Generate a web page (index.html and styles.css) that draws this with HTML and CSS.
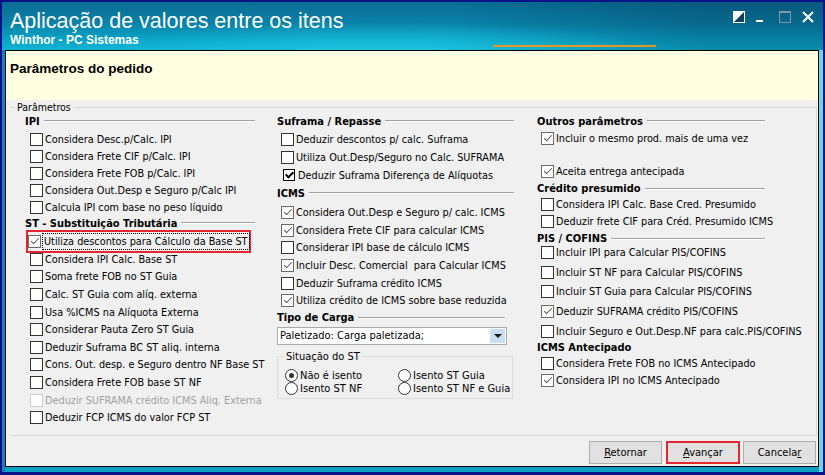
FILE: index.html
```html
<!DOCTYPE html>
<html lang="pt-BR">
<head>
  <meta charset="UTF-8">
  <meta name="viewport" content="width=device-width, initial-scale=1.0">
  <title>Aplicação de valores entre os itens</title>
  <link rel="stylesheet" href="styles.css">
</head>
<body>
  <div class="window">
    <div class="titlebar">
      <div class="titles">
        <div class="title">Aplicação de valores entre os itens</div>
        <div class="subtitle">Winthor - PC Sistemas</div>
      </div>
      <div class="controls">
        <svg width="12" height="12" viewBox="0 0 12 12"><rect x="0.5" y="0.5" width="11" height="11" fill="#fff"/><path d="M11.5 0.5 L11.5 11.5 L0.5 11.5 Z" fill="#0b3f66"/><rect x="0.5" y="0.5" width="11" height="11" fill="none" stroke="#fff"/></svg>
        <svg width="12" height="12" viewBox="0 0 12 12"><rect x="0" y="9" width="7" height="2" fill="#fff"/></svg>
        <svg width="12" height="12" viewBox="0 0 12 12"><rect x="0.5" y="0.5" width="11" height="11" fill="none" stroke="#7f9aa8"/><rect x="0" y="0" width="12" height="2" fill="#7f9aa8"/></svg>
        <svg width="12" height="12" viewBox="0 0 12 12"><path d="M1 1 L11 11 M11 1 L1 11" stroke="#fff" stroke-width="2"/></svg>
      </div>
      <div class="accent"></div>
    </div>

    <div class="frame">
      <div class="panel">
        <div class="header">Parâmetros do pedido</div>

        <div class="content">
          <fieldset class="params">
            <legend>Parâmetros</legend>
            <div class="columns">

              <!-- coluna 1 -->
              <div class="col col-1">
                <div class="sec">IPI</div>
                <div class="rows h17 mt3">
                  <div class="row"><span class="box"></span>Considera Desc.p/Calc. IPI</div>
                  <div class="row"><span class="box"></span>Considera Frete CIF p/Calc. IPI</div>
                  <div class="row"><span class="box"></span>Considera Frete FOB p/Calc. IPI</div>
                  <div class="row"><span class="box"></span>Considera Out.Desp e Seguro p/Calc IPI</div>
                  <div class="row"><span class="box"></span>Calcula IPI com base no peso líquido</div>
                </div>
                <div class="sec">ST - Substituição Tributária</div>
                <div class="row hl"><span class="box on"></span><span class="focus">Utiliza descontos para Cálculo da Base ST</span></div>
                <div class="rows h176">
                  <div class="row"><span class="box"></span>Considera IPI Calc. Base ST</div>
                  <div class="row"><span class="box"></span>Soma frete FOB no ST Guia</div>
                  <div class="row"><span class="box"></span>Calc. ST Guia com alíq. externa</div>
                  <div class="row"><span class="box"></span>Usa %ICMS na Alíquota Externa</div>
                  <div class="row"><span class="box"></span>Considerar Pauta Zero ST Guia</div>
                  <div class="row"><span class="box"></span>Deduzir Suframa BC ST aliq. interna</div>
                  <div class="row"><span class="box"></span>Cons. Out. desp. e Seguro dentro NF Base ST</div>
                  <div class="row"><span class="box"></span>Considera Frete FOB base ST NF</div>
                  <div class="row off"><span class="box"></span>Deduzir SUFRAMA crédito ICMS Aliq. Externa</div>
                  <div class="row"><span class="box"></span>Deduzir FCP ICMS do valor FCP ST</div>
                </div>
              </div>

              <!-- coluna 2 -->
              <div class="col col-2">
                <div class="sec">Suframa / Repasse</div>
                <div class="rows h18 mt2">
                  <div class="row"><span class="box"></span>Deduzir descontos p/ calc. Suframa</div>
                  <div class="row"><span class="box"></span>Utiliza Out.Desp/Seguro no Calc. SUFRAMA</div>
                  <div class="row"><span class="box classic on"></span>Deduzir Suframa Diferença de Alíquotas</div>
                </div>
                <div class="sec mt2">ICMS</div>
                <div class="rows h176 mt4">
                  <div class="row"><span class="box on"></span>Considera Out.Desp e Seguro p/ calc. ICMS</div>
                  <div class="row"><span class="box on"></span>Considera Frete CIF para calcular ICMS</div>
                  <div class="row"><span class="box"></span>Considerar IPI base de cálculo ICMS</div>
                  <div class="row"><span class="box on"></span>Incluir Desc. Comercial&nbsp; para Calcular ICMS</div>
                  <div class="row"><span class="box"></span>Deduzir Suframa crédito ICMS</div>
                  <div class="row"><span class="box on"></span>Utiliza crédito de ICMS sobre base reduzida</div>
                </div>
                <div class="sec short mt1">Tipo de Carga</div>
                <div class="combo">
                  <span>Paletizado: Carga paletizada;</span>
                  <span class="drop"></span>
                </div>
                <fieldset class="situacao">
                  <legend>Situação do ST</legend>
                  <div class="radios">
                    <div class="radio"><span class="dot on"></span>Não é isento</div>
                    <div class="radio"><span class="dot"></span>Isento ST Guia</div>
                    <div class="radio"><span class="dot"></span>Isento ST NF</div>
                    <div class="radio"><span class="dot"></span>Isento ST NF e Guia</div>
                  </div>
                </fieldset>
              </div>

              <!-- coluna 3 -->
              <div class="col col-3">
                <div class="sec">Outros parâmetros</div>
                <div class="rows h165 mt2">
                  <div class="row"><span class="box on"></span>Incluir o mesmo prod. mais de uma vez</div>
                  <div class="row"></div>
                  <div class="row"><span class="box on"></span>Aceita entrega antecipada</div>
                </div>
                <div class="sec mt2">Crédito presumido</div>
                <div class="rows h17">
                  <div class="row"><span class="box"></span>Considera IPI Calc. Base Cred. Presumido</div>
                  <div class="row"><span class="box"></span>Deduzir frete CIF para Créd. Presumido ICMS</div>
                </div>
                <div class="sec mt2">PIS / COFINS</div>
                <div class="rows h197 up3">
                  <div class="row"><span class="box"></span>Incluir IPI para Calcular PIS/COFINS</div>
                  <div class="row"><span class="box"></span>Incluir ST NF para Calcular PIS/COFINS</div>
                  <div class="row"><span class="box"></span>Incluir ST Guia para Calcular PIS/COFINS</div>
                  <div class="row"><span class="box on"></span>Deduzir SUFRAMA crédito PIS/COFINS</div>
                  <div class="row"><span class="box"></span>Incluir Seguro e Out.Desp.NF para calc.PIS/COFINS</div>
                </div>
                <div class="sec noline">ICMS Antecipado</div>
                <div class="rows h17">
                  <div class="row"><span class="box"></span>Considera Frete FOB no ICMS Antecipado</div>
                  <div class="row"><span class="box on"></span>Considera IPI no ICMS Antecipado</div>
                </div>
              </div>

            </div>
          </fieldset>
        </div>

        <div class="footer">
          <button class="btn"><u>R</u>etornar</button>
          <button class="btn hl-btn"><u>A</u>vançar</button>
          <button class="btn">Cancela<u>r</u></button>
        </div>
      </div>
    </div>
  </div>
</body>
</html>
```

FILE: styles.css
```css
body {
  margin: 0;
  font-family: "DejaVu Sans Condensed", "Liberation Sans", Arial, sans-serif;
  font-size: 10.8px;
  color: #000;
}

.window {
  width: 825px;
  height: 475px;
  box-sizing: border-box;
  border: 2px solid #0a1288;
  border-bottom-width: 3px;
  display: flex;
  flex-direction: column;
}

/* barra de titulo */
.titlebar {
  height: 48px;
  flex: none;
  position: relative;
  display: flex;
  justify-content: space-between;
  align-items: flex-start;
  padding: 0 9px 0 8px;
  color: #fff;
  font-family: "Liberation Sans", Arial, sans-serif;
  background:
    radial-gradient(ellipse 420px 40px at 45% 100%, rgba(40, 210, 235, 0.55), rgba(40, 210, 235, 0) 70%),
    linear-gradient(100deg, rgba(0, 0, 0, 0) 55%, rgba(0, 30, 60, 0.25) 85%),
    linear-gradient(180deg, #0a6c93 0%, #0a82a8 45%, #08a0c3 75%, #10b3d3 100%);
}

.title {
  font-size: 21.5px;
  line-height: 24px;
  margin-top: 7px;
}

.subtitle {
  font-weight: bold;
  font-size: 12px;
  line-height: 14px;
}

.controls {
  display: flex;
  gap: 11px;
  margin-top: 9px;
}

.accent {
  position: absolute;
  left: 491px;
  top: 43px;
  width: 163px;
  height: 2px;
  background: #e49a22;
}

/* moldura e painel */
.frame {
  flex: 1;
  display: flex;
  padding: 0 4px 5px 3px;
  background: linear-gradient(90deg, #1a7fbf 0, #1a7fbf 3px, #0fa2c5 3px, #0fa2c5 calc(100% - 4px), #6ad6e8 calc(100% - 4px));
}

.panel {
  flex: 1;
  display: flex;
  flex-direction: column;
  border: 1px solid #000;
  background: #f0f0f0;
  min-width: 0;
}

.header {
  height: 49px;
  flex: none;
  box-sizing: border-box;
  background: #ffffe1;
  font-family: "Liberation Sans", Arial, sans-serif;
  font-weight: bold;
  font-size: 13.5px;
  line-height: 16px;
  padding: 10px 0 0 4px;
}

.content {
  flex: 1;
  display: flex;
  padding: 0 1px 0 4px;
}

.params {
  flex: 1;
  margin: 1px 0 0 0;
  padding: 0 0 0 15px;
  border: 1px solid #dadada;
  border-left: none;
  min-width: 0;
}

.params > legend {
  margin-left: -10px;
  padding: 0 2px;
  line-height: 13px;
  font-size: 10.5px;
}

.columns {
  display: flex;
}

.col-1 { width: 230px; margin-right: 22px; }
.col-2 { width: 237px; margin-right: 23px; }
.col-3 { width: 228px; }

/* titulos de secao */
.sec {
  display: flex;
  align-items: center;
  height: 14px;
  font-weight: bold;
  font-size: 11px;
  white-space: nowrap;
}

.sec::after {
  content: "";
  flex: 1;
  margin-left: 4px;
  border-top: 1px solid #a0a0a0;
  border-bottom: 1px solid #fff;
}

.sec.short::after { margin-right: 9px; }
.sec.noline::after { display: none; }

.mt1 { margin-top: 1px; }
.mt2 { margin-top: 2px; }
.mt3 { margin-top: 3px; }
.mt4 { margin-top: 4px; }
.up3 { margin-top: -3px; }

/* linhas de checkbox */
.row {
  display: flex;
  align-items: center;
  height: 17px;
  padding-left: 4px;
  white-space: nowrap;
}

.col-1 .row { padding-left: 5px; }

.h165 .row { height: 16.5px; }
.h17 .row { height: 17px; }
.h176 .row { height: 17.6px; }
.h18 .row { height: 18px; }
.h197 .row { height: 19.7px; }

.box {
  position: relative;
  flex: none;
  width: 13px;
  height: 13px;
  box-sizing: border-box;
  border: 1px solid #333;
  background: #fff;
  margin-right: 2px;
}

.box.on { border-color: #6a6a6a; }

.box.on::after {
  content: "";
  position: absolute;
  left: 4px;
  top: 0px;
  width: 3px;
  height: 7px;
  border: solid #5a5a5a;
  border-width: 0 1px 1px 0;
  transform: rotate(45deg);
}

.box.classic {
  width: 12px;
  height: 12px;
  margin-left: 2px;
  margin-right: 3px;
  border-color: #000;
}

.box.classic::after {
  left: 3px;
  top: 0px;
  width: 3px;
  height: 6px;
  border-color: #000;
  border-width: 0 2px 2px 0;
}

.row.off { color: #a0a0a0; }
.row.off .box { border-color: #cfcfcf; }

/* linha destacada */
.row.hl {
  width: max-content;
  height: 23px;
  box-sizing: border-box;
  margin: 0 0 -2.5px 1px;
  padding-left: 0;
  border: 2px solid #e3262f;
}

.focus {
  outline: 1px dotted #000;
  padding: 0 1px;
  line-height: 15px;
}

/* combo */
.combo {
  display: flex;
  align-items: center;
  justify-content: space-between;
  width: 230px;
  height: 18px;
  box-sizing: border-box;
  margin-top: 2px;
  padding: 0 1px 0 2px;
  border: 1px solid #a9a9a9;
  background: #fff;
  font-size: 11px;
}

.drop {
  position: relative;
  width: 15px;
  height: 14px;
  background: #c9def3;
}

.drop::after {
  content: "";
  position: absolute;
  left: 4px;
  top: 5px;
  border-left: 4px solid transparent;
  border-right: 4px solid transparent;
  border-top: 4px solid #1a1a1a;
}

/* situacao do st */
.situacao {
  margin: 5px 1px 0 0;
  padding: 0 0 3px 7px;
  border: 1px solid #dcdcdc;
}

.situacao > legend {
  margin-left: -1px;
  padding: 0 2px;
  line-height: 13px;
  font-size: 11px;
}

.radios {
  display: grid;
  grid-template-columns: 113px 1fr;
  padding-top: 6px;
  font-size: 11px;
  line-height: 13px;
  white-space: nowrap;
}

.radio {
  display: flex;
  align-items: center;
  height: 13px;
}

.dot {
  position: relative;
  flex: none;
  width: 13px;
  height: 13px;
  box-sizing: border-box;
  border: 1px solid #333;
  border-radius: 50%;
  background: #fff;
  margin-right: 2px;
}

.dot.on::after {
  content: "";
  position: absolute;
  left: 3px;
  top: 3px;
  width: 5px;
  height: 5px;
  border-radius: 50%;
  background: #333;
}

/* rodape */
.footer {
  height: 30px;
  flex: none;
  box-sizing: border-box;
  display: flex;
  justify-content: flex-end;
  align-items: flex-start;
  padding: 5px 2px 0 0;
}

.btn {
  width: 73px;
  height: 23px;
  margin-left: 3px;
  padding: 0;
  font-family: "DejaVu Sans Condensed", "Liberation Sans", Arial, sans-serif;
  font-size: 11px;
  color: #000;
  background: #e1e1e1;
  border: 1px solid #adadad;
}

.btn.hl-btn {
  width: 74px;
  margin-left: 4px;
  border: 2px solid #e3262f;
}
```
